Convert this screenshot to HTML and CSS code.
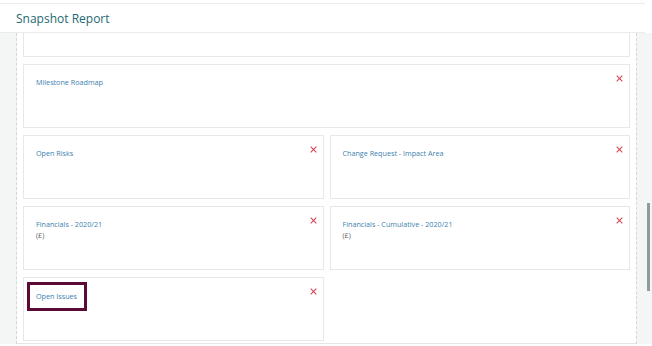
FILE: index.html
```html
<!DOCTYPE html>
<html lang="en">
<head>
  <meta charset="UTF-8" />
  <title>Snapshot Report</title>
  <link rel="stylesheet" href="styles.css">
</head>
<body>
  <div class="page">
    <div class="header">Snapshot Report</div>

    <div class="main">
      <div class="gutter left"></div>

      <div class="content">
        <div class="card cut"></div>

        <div class="card wide">
          <span class="title">Milestone Roadmap</span>
          <button class="remove" title="Remove">
            <svg viewBox="0 0 10 10"><path d="M1 1L9 9M9 1L1 9"/></svg>
          </button>
        </div>

        <div class="grid">
          <div class="card">
            <span class="title">Open Risks</span>
            <button class="remove" title="Remove">
              <svg viewBox="0 0 10 10"><path d="M1 1L9 9M9 1L1 9"/></svg>
            </button>
          </div>
          <div class="card">
            <span class="title">Change Request - Impact Area</span>
            <button class="remove" title="Remove">
              <svg viewBox="0 0 10 10"><path d="M1 1L9 9M9 1L1 9"/></svg>
            </button>
          </div>
          <div class="card">
            <span class="title">Financials - 2020/21</span>
            <span class="unit">(£)</span>
            <button class="remove" title="Remove">
              <svg viewBox="0 0 10 10"><path d="M1 1L9 9M9 1L1 9"/></svg>
            </button>
          </div>
          <div class="card">
            <span class="title">Financials - Cumulative - 2020/21</span>
            <span class="unit">(£)</span>
            <button class="remove" title="Remove">
              <svg viewBox="0 0 10 10"><path d="M1 1L9 9M9 1L1 9"/></svg>
            </button>
          </div>
          <div class="card">
            <span class="title focused">Open Issues</span>
            <button class="remove" title="Remove">
              <svg viewBox="0 0 10 10"><path d="M1 1L9 9M9 1L1 9"/></svg>
            </button>
          </div>
        </div>
      </div>

      <div class="gutter right">
        <div class="scrollbar"></div>
      </div>
    </div>
  </div>
</body>
</html>
```

FILE: styles.css
```css
* { box-sizing: border-box; margin: 0; padding: 0; }

body {
  background: #fff;
  font-family: 'Open Sans', 'Noto Sans', sans-serif;
  width: 652px;
  height: 346px;
  overflow: hidden;
}

.page {
  padding-top: 3px;
  width: 652px;
}

.header {
  height: 30px;
  width: 645px;
  border-top: 1px solid #ebebeb;
  border-bottom: 1px solid #ebebeb;
  padding: 6px 0 0 16px;
  font-size: 12px;
  color: #1d6a70;
}

.main {
  display: flex;
  height: 311px;
  width: 652px;
}

.gutter {
  width: 17px;
  background: #f4f5f5;
}

.gutter.left {
  border-right: 1px dashed #d6d6d6;
}

.gutter.right {
  width: 16px;
  border-left: 1px dashed #d6d6d6;
  position: relative;
}

.scrollbar {
  position: absolute;
  left: 10px;
  top: 170px;
  width: 3px;
  height: 88px;
  background: #8e9d9c;
}

.content {
  width: 619px;
  padding: 0 6px;
  display: flex;
  flex-direction: column;
  gap: 7px;
  overflow: hidden;
  border-bottom: 1px solid #e6e6e6;
}

.card {
  position: relative;
  height: 64px;
  border: 1px solid #e8e8e8;
  background: #fff;
  padding: 12px 0 0 12px;
  display: flex;
  flex-direction: column;
  font-size: 7.2px;
  line-height: 10px;
}

.card.cut {
  height: 24px;
  border-top: none;
  flex-shrink: 0;
}

.card.wide { flex-shrink: 0; }

.grid {
  display: grid;
  grid-template-columns: 1fr 1fr;
  gap: 7px 6px;
}

.title {
  color: #3d7fae;
  align-self: flex-start;
  line-height: 11px;
}

.title.focused {
  margin-top: 1px;
  outline: 3px solid #5c0a35;
  padding: 6px 7px 6px 6px;
  margin-left: -6px;
  position: relative;
  top: -6px;
}

.unit {
  color: #666;
}

.remove {
  position: absolute;
  top: 10px;
  right: 6px;
  width: 7px;
  height: 7px;
  border: none;
  background: none;
  cursor: pointer;
}

.remove svg {
  display: block;
  width: 7px;
  height: 7px;
  stroke: #d2464f;
  stroke-width: 1.5;
  fill: none;
}
```
